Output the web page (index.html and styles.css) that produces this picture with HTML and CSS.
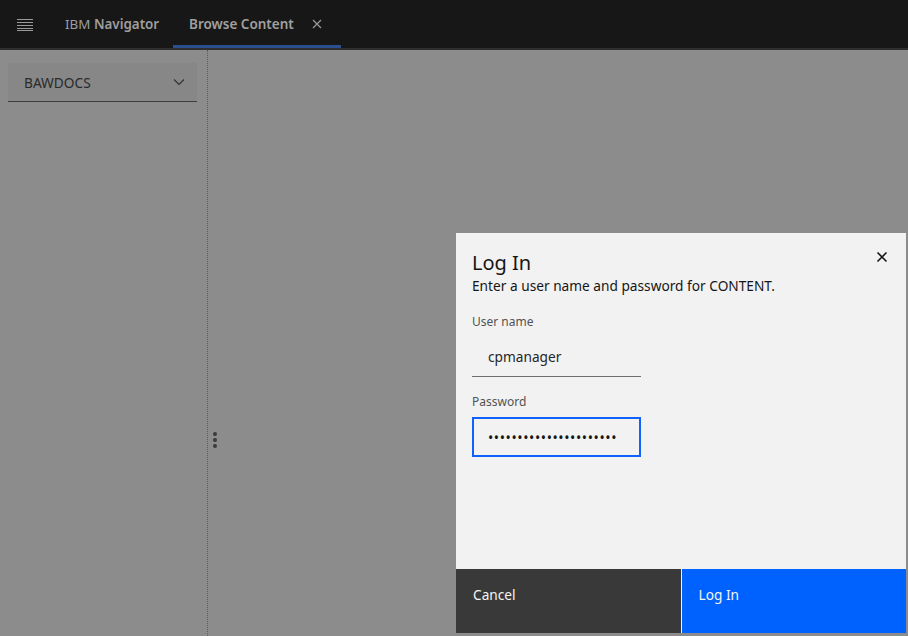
FILE: index.html
```html
<!DOCTYPE html>
<html lang="en">
    <head>
        <meta charset="utf-8">
        <link rel="stylesheet" href="styles.css">
    </head>
    <body>
    <div class="app">
        <header class="topbar">
            <span class="menu">
                <svg width="16" height="12" viewBox="0 0 16 12"><path d="M0 0.5h16M0 3.5h16M0 6.5h16M0 9.5h16M0 11.5h16" stroke="#9a9a9a" stroke-width="1"/></svg>
            </span>
            <span class="brand">IBM <b>Navigator</b></span>
            <span class="tab">
                <span class="tab-name">Browse Content</span>
                <svg width="10" height="10" viewBox="0 0 10 10"><path d="M1 1l8 8M9 1l-8 8" stroke="#9a9a9a" stroke-width="1.2"/></svg>
            </span>
        </header>
        <div class="main">
            <aside class="side">
                <div class="select">
                    <span>BAWDOCS</span>
                    <svg width="12" height="8" viewBox="0 0 12 8"><path d="M1 1.5l5 5 5-5" fill="none" stroke="#333" stroke-width="1.2"/></svg>
                </div>
            </aside>
            <div class="divider"></div>
            <div class="handle"><i></i><i></i><i></i></div>
            <section class="content"></section>
        </div>

        <div class="dialog">
            <div class="dialog-body">
                <button class="close">
                    <svg width="12" height="12" viewBox="0 0 12 12"><path d="M1.5 1.5l9 9M10.5 1.5l-9 9" stroke="#161616" stroke-width="1.6"/></svg>
                </button>
                <h2>Log In</h2>
                <p class="sub">Enter a user name and password for CONTENT.</p>
                <label class="lbl">User name</label>
                <div class="field">cpmanager</div>
                <label class="lbl">Password</label>
                <div class="field focus">••••••••••••••••••••••</div>
            </div>
            <div class="dialog-foot">
                <button class="btn cancel">Cancel</button>
                <button class="btn primary">Log In</button>
            </div>
        </div>
    </div>
    </body>
</html>
```
FILE: styles.css
```css
html, body{
    margin:0;
    padding:0;
}
body{
    width:908px;
    height:636px;
    overflow:hidden;
    background:#8c8c8c;
    font-family:"Noto Sans", "Open Sans", sans-serif;
}
.app{
    position:relative;
    width:908px;
    height:636px;
    display:flex;
    flex-direction:column;
}
.topbar{
    height:48px;
    background:#171717;
    border-bottom:2px solid #2f2f2f;
    display:flex;
    align-items:center;
    flex:none;
}
.menu{
    width:48px;
    display:flex;
    justify-content:center;
    padding-left:1px;
    padding-top:1px;
}
.brand{
    color:#9e9e9e;
    font-size:13.4px;
    padding-left:16px;
    width:108px;
}
.brand b{
    font-weight:600;
}
.tab{
    height:48px;
    box-sizing:border-box;
    width:168px;
    border-bottom:3px solid #2b4f8e;
    display:flex;
    align-items:center;
    padding:3px 0 0 16px;
    color:#a0a0a0;
    font-size:13.5px;
    font-weight:600;
}
.tab-name{
    width:123px;
}
.main{
    flex:1;
    display:flex;
}
.side{
    width:207px;
    padding:13px 10px 0 8px;
    box-sizing:border-box;
}
.select{
    height:38px;
    background:#878787;
    border-bottom:1px solid #3d3d3d;
    display:flex;
    align-items:center;
    justify-content:space-between;
    padding:0 12px 0 16px;
    font-size:13.7px;
    color:#2a2a2a;
}
.divider{
    width:0;
    border-left:1px dotted #5e5e5e;
}
.handle{
    width:13px;
    display:flex;
    flex-direction:column;
    align-items:center;
    gap:2px;
    padding-top:382px;
    box-sizing:border-box;
}
.handle i{
    display:block;
    width:4px;
    height:4px;
    border-radius:2px;
    background:#3a3a3a;
}
.content{
    flex:1;
}
.dialog{
    position:absolute;
    left:456px;
    top:233px;
    width:450px;
    height:400px;
    background:#f2f2f2;
    display:flex;
    flex-direction:column;
}
.dialog-body{
    position:relative;
    flex:1;
    padding:16px 16px 0 16px;
}
.close{
    position:absolute;
    right:14px;
    top:15px;
    border:none;
    background:none;
    padding:0;
    width:20px;
    height:20px;
}
h2{
    margin:0;
    font-size:20px;
    font-weight:400;
    color:#161616;
    line-height:28px;
}
.sub{
    margin:0 0 19px 0;
    font-size:13.7px;
    color:#161616;
    line-height:18px;
}
.lbl{
    display:block;
    font-size:12px;
    color:#525252;
    line-height:16px;
    margin-bottom:7px;
}
.field{
    width:169px;
    height:40px;
    box-sizing:border-box;
    border-bottom:1px solid #6f6f6f;
    padding-left:16px;
    display:flex;
    align-items:center;
    font-size:13.7px;
    color:#262626;
    margin-bottom:17px;
}
.field.focus{
    border:2px solid #0f62fe;
    padding-left:14px;
    font-size:14px;
    letter-spacing:0.6px;
    color:#161616;
}
.dialog-foot{
    height:64px;
    display:flex;
    gap:1px;
    background:#f2f2f2;
}
.btn{
    flex:1;
    border:none;
    font-family:inherit;
    font-size:13.7px;
    text-align:left;
    padding:0 16px 14px 17px;
    color:#f4f4f4;
}
.cancel{
    background:#393939;
}
.primary{
    background:#0062fe;
}
```
